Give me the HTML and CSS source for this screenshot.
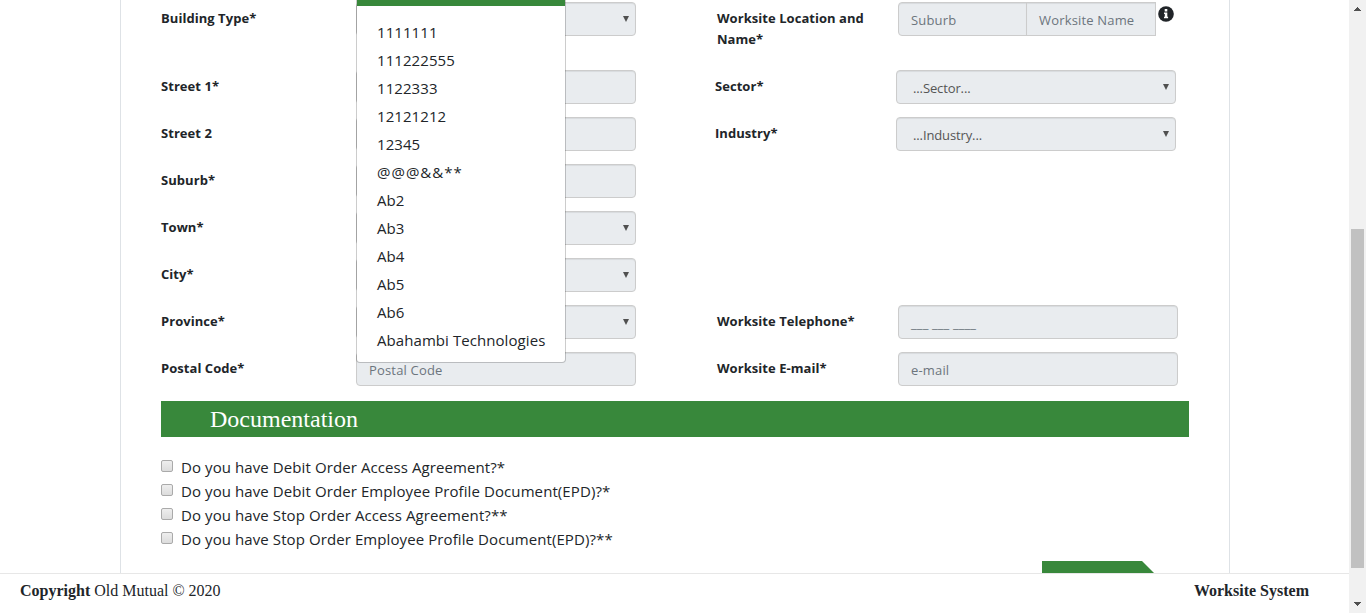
FILE: index.html
```html
<!DOCTYPE html>
<html lang="en">
<head>
<meta charset="utf-8">
<title>Worksite System</title>
<link rel="stylesheet" href="styles.css">
</head>
<body>
<div class="window">
  <div class="page">
    <main class="card">
      <div class="form">
        <div class="row row-first">
          <label class="label">Building Type*</label>
          <div class="field select"></div>
          <label class="label">Worksite Location and<br>Name*</label>
          <div class="pair">
            <div class="field pair-start">Suburb</div>
            <div class="field pair-end">Worksite Name</div>
            <svg class="info" viewBox="0 0 16 16"><circle cx="8" cy="8" r="7.8" fill="#212529"/><path fill="#fff" d="M6.7 3h2.6v2.4H6.7zM6 6.5h3.3v4.2h.8v1.6H6v-1.6h.8V8H6z"/></svg>
          </div>
        </div>
        <div class="row narrow">
          <label class="label">Street 1*</label>
          <div class="field"></div>
          <label class="label">Sector*</label>
          <div class="field select choice">...Sector...</div>
        </div>
        <div class="row narrow">
          <label class="label">Street 2</label>
          <div class="field"></div>
          <label class="label">Industry*</label>
          <div class="field select choice">...Industry...</div>
        </div>
        <div class="row">
          <label class="label">Suburb*</label>
          <div class="field"></div>
        </div>
        <div class="row">
          <label class="label">Town*</label>
          <div class="field select"></div>
        </div>
        <div class="row">
          <label class="label">City*</label>
          <div class="field select"></div>
        </div>
        <div class="row">
          <label class="label">Province*</label>
          <div class="field select"></div>
          <label class="label">Worksite Telephone*</label>
          <div class="field phone">___ ___ ____</div>
        </div>
        <div class="row">
          <label class="label">Postal Code*</label>
          <div class="field">Postal Code</div>
          <label class="label">Worksite E-mail*</label>
          <div class="field">e-mail</div>
        </div>
        <div class="menu">
          <div class="menu-head"></div>
          <ul class="menu-list">
            <li>1111111</li>
            <li>111222555</li>
            <li>1122333</li>
            <li>12121212</li>
            <li>12345</li>
            <li class="symbols">@@@&amp;&amp;**</li>
            <li>Ab2</li>
            <li>Ab3</li>
            <li>Ab4</li>
            <li>Ab5</li>
            <li>Ab6</li>
            <li>Abahambi Technologies</li>
          </ul>
        </div>
      </div>
      <h2 class="section-title">Documentation</h2>
      <div class="checks">
        <div class="check"><span class="box"></span><span>Do you have Debit Order Access Agreement?*</span></div>
        <div class="check"><span class="box"></span><span>Do you have Debit Order Employee Profile Document(EPD)?*</span></div>
        <div class="check"><span class="box"></span><span>Do you have Stop Order Access Agreement?**</span></div>
        <div class="check"><span class="box"></span><span>Do you have Stop Order Employee Profile Document(EPD)?**</span></div>
      </div>
      <div class="next"></div>
    </main>
    <footer class="footer">
      <span><b>Copyright</b> Old Mutual © 2020</span>
      <b>Worksite System</b>
    </footer>
  </div>
  <div class="scrollbar">
    <svg class="arrow" viewBox="0 0 17 17"><path fill="#505050" d="M5 11h7v-1h-1V9h-1V8H9V7H8v1H7v1H6v1H5z"/></svg>
    <div class="thumb"></div>
    <svg class="arrow" viewBox="0 0 17 17"><path fill="#505050" d="M5 6h7v1h-1v1h-1v1H9v1H8V9H7V8H6V7H5z"/></svg>
  </div>
</div>
</body>
</html>
```
FILE: styles.css
```css
* { box-sizing: border-box; }

body {
  margin: 0;
  background: #fff;
  color: #212529;
  font-family: "Open Sans", "Noto Sans", sans-serif;
}

.window {
  display: flex;
  height: 613px;
  overflow: hidden;
}

.page {
  flex: 1;
  display: flex;
  flex-direction: column;
}

.card {
  width: 1110px;
  height: 573px;
  margin-left: 120px;
  padding: 2px 40px 0;
  border: solid #dee2e6;
  border-width: 0 1px;
  overflow: hidden;
  display: flex;
  flex-direction: column;
}

.form {
  position: relative;
  height: 399px;
  flex: none;
}

.row {
  display: grid;
  grid-template-columns: 195px 280px 81px 181px 280px;
  height: 47px;
  align-items: start;
}

.row-first { height: 68px; }
.row.narrow { grid-template-columns: 195px 280px 79px 181px 280px; }

.label {
  padding-top: 6px;
  font-size: 13px;
  font-weight: 700;
  letter-spacing: .05px;
  line-height: 21px;
  white-space: nowrap;
}

.row .label:nth-of-type(2) { grid-column: 4; }

.field {
  height: 34px;
  padding: 1px 12px 0;
  border: 1px solid #ccc;
  border-radius: 4px;
  background: #e9ecef;
  box-shadow: inset 0 1px 1px rgba(0, 0, 0, .075);
  color: #6c757d;
  font-size: 13px;
  letter-spacing: .17px;
  line-height: 33px;
  white-space: nowrap;
}

.choice {
  padding-left: 16px;
  color: #555;
  letter-spacing: -.12px;
}

.select {
  display: flex;
  justify-content: space-between;
}

.select::after {
  content: "";
  width: 6px;
  height: 6px;
  margin: 12px -6px 0 auto;
  background: #505050;
  clip-path: polygon(0 0, 100% 0, 50% 100%);
}

.phone { letter-spacing: .12px; }

.pair { display: flex; }
.pair-start { width: 129px; border-radius: 4px 0 0 4px; }
.pair-end { width: 130px; margin-left: -1px; border-radius: 0; }
.info { width: 16px; height: 16px; margin: 4px 0 0 2px; flex: none; }

.menu {
  position: absolute;
  left: 195px;
  top: -2px;
  width: 210px;
  height: 363px;
  border: 1px solid rgba(0, 0, 0, .2);
  border-top: 0;
  border-radius: 0 0 4px 4px;
  background: #fff;
  background-clip: padding-box;
}

.menu-head { height: 6px; background: #38883b; }

.menu-list {
  margin: 0;
  padding: 12px 20px 0;
  list-style: none;
  font-size: 15px;
  letter-spacing: .07px;
  line-height: 28px;
  white-space: nowrap;
}

.symbols { letter-spacing: 1px; }

.section-title {
  flex: none;
  height: 36px;
  margin: 0;
  padding-left: 49px;
  background: #38883b;
  color: #fff;
  font: 400 24px/36px "Liberation Serif", serif;
}

.checks {
  flex: none;
  padding-top: 18px;
  font-size: 15px;
  letter-spacing: .09px;
  line-height: 24px;
}

.check { display: flex; gap: 8px; height: 24px; white-space: nowrap; }

.box {
  width: 12px;
  height: 12px;
  margin-top: 5px;
  border: 1px solid #aaa;
  border-radius: 2px;
  background: linear-gradient(#eee, #dcdcdc);
}

.next {
  flex: none;
  align-self: flex-end;
  width: 126px;
  height: 26px;
  margin: 10px 21px 0 0;
  background: #38883b;
  clip-path: polygon(0 0, 100px 0, 100% 100%, 0 100%);
}

.footer {
  display: flex;
  justify-content: space-between;
  height: 40px;
  padding: 0 40px 0 20px;
  border-top: 1px solid #e7e7e7;
  font: 16px/34px "Liberation Serif", serif;
}

.scrollbar {
  width: 17px;
  display: flex;
  flex-direction: column;
  justify-content: space-between;
  background: #f1f1f1;
}

.arrow { width: 17px; height: 17px; shape-rendering: crispEdges; }
.thumb { width: 13px; height: 339px; margin: 184px 0 0 2px; background: #c1c1c1; }
```
